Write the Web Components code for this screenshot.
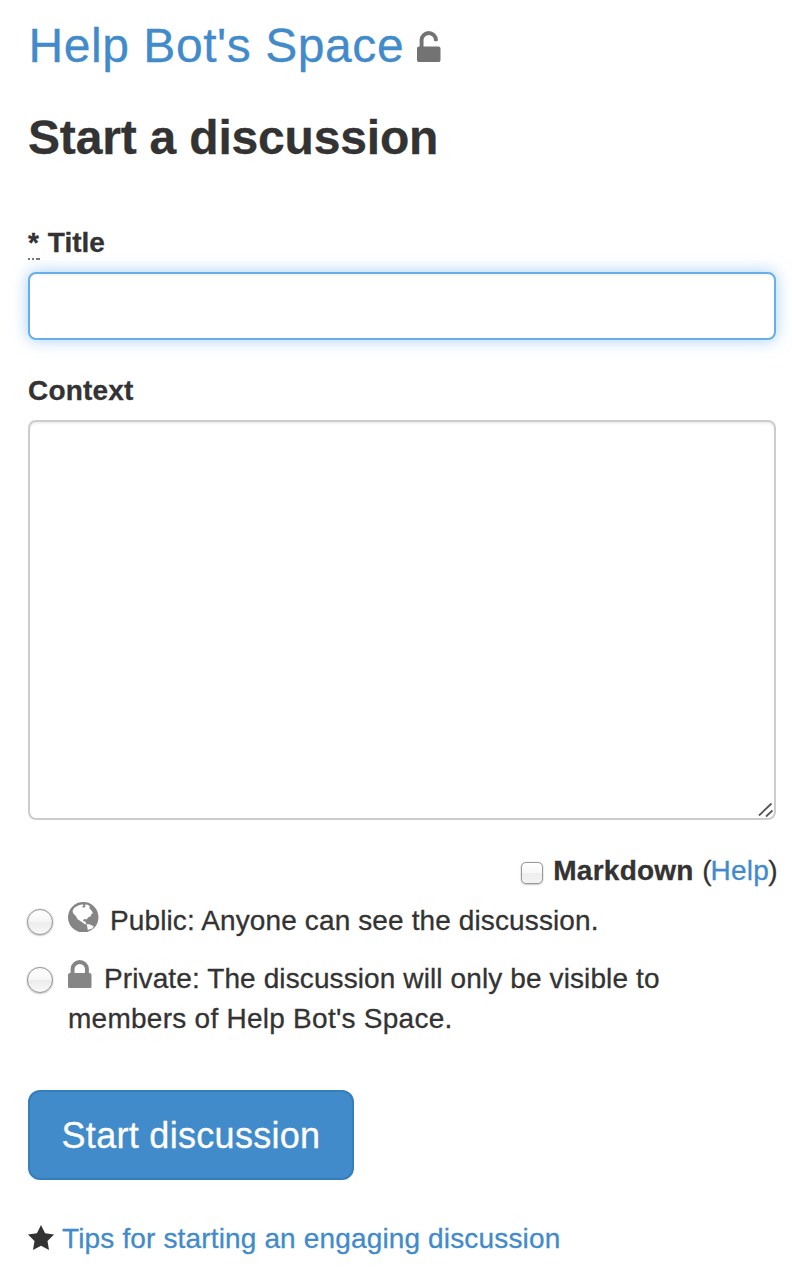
<!DOCTYPE html>
<html lang="en">
<head>
<meta charset="utf-8">
<title>Start a discussion</title>
<style>
body{margin:0;background:#fff;color:#333;font:28px/40px "Liberation Sans",Arial,sans-serif;-webkit-text-stroke:.3px currentColor}
</style>
</head>
<body>
<discussion-page></discussion-page>
<script>
function define(name, html) {
  const template = document.createElement('template');
  template.innerHTML = html;
  customElements.define(name, class extends HTMLElement {
    constructor() {
      super();
      this.attachShadow({mode: 'open'}).appendChild(template.content.cloneNode(true));
    }
  });
}

const ICONS = {
  lock: ['0 0 1152 1408', '<path transform="translate(0 1408) scale(1 -1)" d="M320 768h512v192q0 106 -75 181t-181 75t-181 -75t-75 -181v-192zM1152 672v-576q0 -40 -28 -68t-68 -28h-960q-40 0 -68 28t-28 68v576q0 40 28 68t68 28h32v192q0 184 132 316t316 132t316 -132t132 -316v-192h32q40 0 68 -28t28 -68z"/>'],
  unlock: ['0 0 1152 1536', '<path transform="translate(0 1536) scale(1 -1)" d="M1056 768q40 0 68 -28t28 -68v-576q0 -40 -28 -68t-68 -28h-960q-40 0 -68 28t-28 68v576q0 40 28 68t68 28h32v320q0 185 131.5 316.5t316.5 131.5t316.5 -131.5t131.5 -316.5q0 -26 -19 -45t-45 -19h-64q-26 0 -45 19t-19 45q0 106 -75 181t-181 75t-181 -75t-75 -181v-320h736z"/>'],
  star: ['0 0 26 25', '<path d="M13 0L17.1 8.2L26 9.5L19.5 15.9L21 25L13 20.7L5 25L6.5 15.9L0 9.5L8.9 8.2Z"/>'],
  globe: ['0 0 30 30', '<circle cx="15" cy="15" r="15"/><path fill="#fff" d="M4.5 8.5L6 6L9 4L12 2.8L14.5 2.4L15.5 3.2L14 4.5L14.8 5.6L16.5 5.2L17.2 3.6L16.6 2.4L19.5 2.8L21.5 4.5L21 6.2L23 8L24.5 11L22.5 12.2L22.8 13.8L20 15L18.3 17.2L16.5 16.6L15 17.4L15 19.3L17 19L17.5 21L19 22.5L16 21.5L12.5 19L9.5 17L7.5 13.5L5 11ZM18.5 22L21 22L25.3 23.8L24 26L19.5 27.6L19 25Z"/>']
};
customElements.define('glyph-icon', class extends HTMLElement {
  constructor() {
    super();
    const [box, body] = ICONS[this.getAttribute('name')];
    this.attachShadow({mode: 'open'}).innerHTML =
      `<style>:host{display:block;flex:none}svg{display:block;width:100%;height:100%;fill:currentColor}</style><svg viewBox="${box}" preserveAspectRatio="none" aria-hidden="true">${body}</svg>`;
  }
});

define('text-link', `<style>:host{display:inline;color:#428bca;-webkit-text-stroke:.3px #428bca;cursor:pointer}</style><slot></slot>`);

define('space-header', `
<style>
:host{display:block}
.space{display:flex;height:52px;font-size:48px;line-height:52px}
.space text-link{letter-spacing:.56px;padding-left:.5px}
glyph-icon{width:23.5px;height:31px;margin:11px 0 0 13px;color:#737373}
h1{margin:40px 0 0;font-size:48px;line-height:52px;font-weight:bold;letter-spacing:-.18px}
</style>
<div class="space"><text-link><slot name="space"></slot></text-link><glyph-icon name="unlock"></glyph-icon></div>
<h1><slot></slot></h1>`);

define('form-field', `
<style>
:host{display:block}
.label{display:block;height:40px;font-weight:bold;margin-bottom:9px;letter-spacing:var(--label-spacing,0)}
</style>
<span class="label"><slot name="label"></slot></span><slot></slot>`);

define('required-mark', `
<style>
:host{display:inline-block;height:37px;width:12px;background:linear-gradient(90deg,#777 0 2px,transparent 2px 4px,#777 4px 6px,transparent 6px 8px,#777 8px 12px) 0 100%/12px 2px no-repeat}
</style>*`);

define('text-box', `
<style>
:host{display:block;box-sizing:border-box;height:68px;border:2px solid #66afe9;border-radius:8px;background:#fff;
box-shadow:inset 0 2px 2px rgba(0,0,0,.04),0 0 16px rgba(102,175,233,.6)}
</style>`);

define('text-area', `
<style>
:host{display:flex;justify-content:flex-end;align-items:flex-end;box-sizing:border-box;height:400px;border:2px solid #ccc;border-radius:8px;background:#fff;box-shadow:inset 0 2px 2px rgba(0,0,0,.06)}
svg{display:block;width:16px;height:16px;margin:0 1px 0 0}
</style>
<svg viewBox="0 0 16 16" fill="none" stroke="#555" stroke-width="1.8"><path d="M2 13.5L14.5 1.5M9 14.5L15.5 8.5"/></svg>`);

define('check-box', `
<style>
:host{display:block;flex:none;box-sizing:border-box;width:22px;height:22px;border:1.5px solid #999;border-radius:5px;
background:linear-gradient(#fff 0,#f8f8f8 48%,#eee 52%,#f3f3f3 100%);box-shadow:0 0 1px #aaa,0 1px 2px rgba(0,0,0,.2)}
</style>`);

define('radio-button', `
<style>
:host{display:block;flex:none;box-sizing:border-box;width:26px;height:26px;border:1.5px solid #959595;border-radius:50%;
background:linear-gradient(#fff 0,#f6f6f6 48%,#ececec 52%,#f8f8f8 100%);box-shadow:0 0 1px #999,0 1px 2px rgba(0,0,0,.2)}
</style>`);

define('markdown-option', `
<style>
:host{display:flex;justify-content:flex-end;height:40px}
check-box{margin:11px 10px 0 0}
b{letter-spacing:.25px}
.help{margin:0 -1.5px 0 8.5px}
text-link{margin:0 -1px 0 -1.2px;letter-spacing:.3px}
</style>
<check-box></check-box><b>Markdown</b><span class="help">(<text-link>Help</text-link>)</span>`);

define('privacy-option', `
<style>
:host{display:flex}
radio-button{margin:8px 15px 0 -1px}
.body{width:640px}
::slotted(glyph-icon){display:inline-block!important;vertical-align:baseline;color:#858585}
</style>
<radio-button></radio-button><div class="body"><slot></slot></div>`);

define('submit-button', `
<style>
:host{display:flex;align-items:center;justify-content:center;box-sizing:border-box;width:326px;height:90px;padding-top:2px;border:2px solid #357ebd;border-radius:12px;background:#428bca;color:#fff;-webkit-text-stroke:.3px #fff;font-size:36px;line-height:48px;letter-spacing:.3px;white-space:nowrap;cursor:pointer}
</style><slot></slot>`);

define('tips-line', `
<style>
:host{display:flex;height:40px}
glyph-icon{width:26px;height:25px;margin:6px 8px 0 0}
text-link{letter-spacing:.15px}
</style>
<glyph-icon name="star"></glyph-icon><text-link><slot></slot></text-link>`);

define('discussion-page', `
<style>
:host{display:block;width:748px;padding:20px 16px 0 28px}
.title{margin-top:59px}
.context{margin-top:31px;--label-spacing:.2px}
markdown-option{margin-top:31px}
.public{margin-top:10px;letter-spacing:.12px}
.private{margin-top:18px;letter-spacing:.11px}
.members{letter-spacing:.26px}
.public glyph-icon{width:30.5px;height:30.5px;margin-right:11.5px;vertical-align:-2px}
.private glyph-icon{width:23.5px;height:28.5px;margin-right:12.5px}
submit-button{margin-top:51px}
tips-line{margin-top:39px}
</style>
<space-header><span slot="space">Help Bot's Space</span>Start a discussion</space-header>
<form-field class="title"><span slot="label"><required-mark></required-mark> Title</span><text-box></text-box></form-field>
<form-field class="context"><span slot="label">Context</span><text-area></text-area></form-field>
<markdown-option></markdown-option>
<privacy-option class="public"><glyph-icon name="globe"></glyph-icon><span>Public: Anyone can see the discussion.</span></privacy-option>
<privacy-option class="private"><glyph-icon name="lock"></glyph-icon><span>Private: The discussion will only be visible to<br><span class="members">members of Help Bot's Space.</span></span></privacy-option>
<submit-button>Start discussion</submit-button>
<tips-line>Tips for starting an engaging discussion</tips-line>`);
</script>
</body>
</html>
